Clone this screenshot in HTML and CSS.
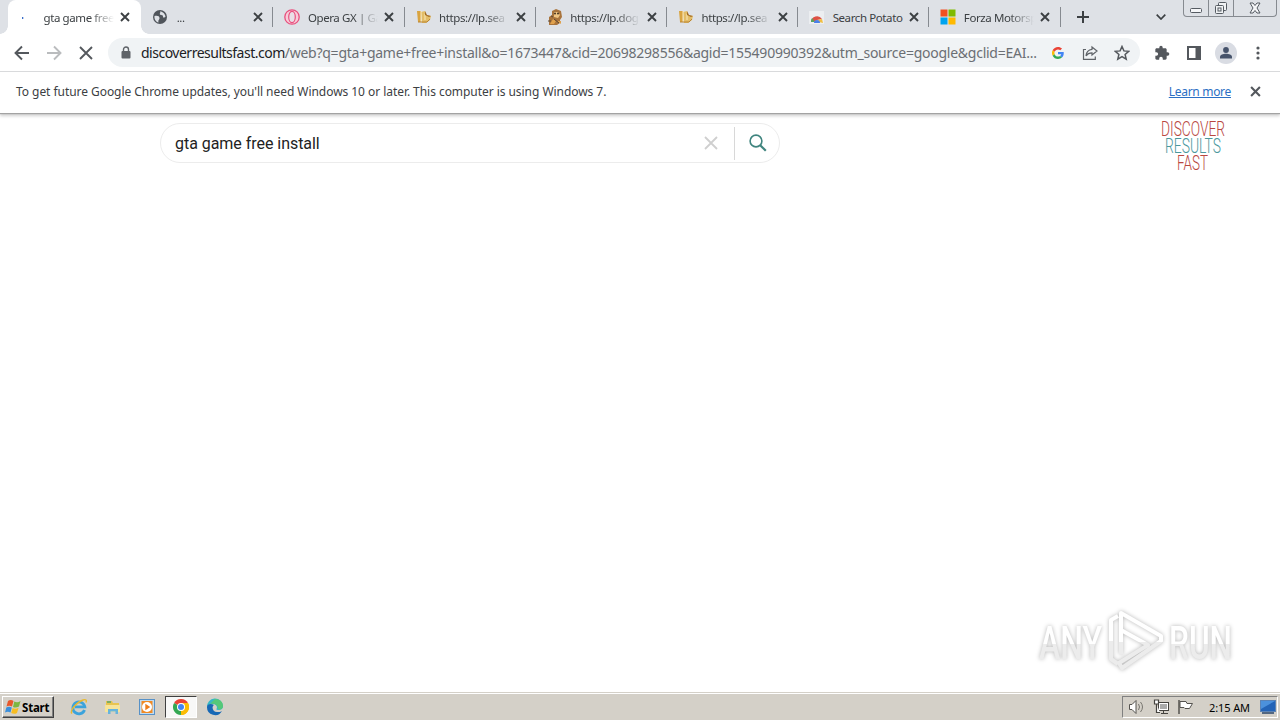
FILE: index.html
```html
<!DOCTYPE html>
<html lang="en">
<head>
    <meta charset="UTF-8">
    <meta name="viewport" content="width=device-width, initial-scale=1.0">
    <title>gta game free install</title>
    <link rel="stylesheet" href="styles.css">
</head>
<body>
    <!-- shared icons -->
    <svg class="defs" width="0" height="0">
        <symbol id="close" viewBox="0 0 10 10"><path d="M1 1l8 8M9 1L1 9" fill="none" stroke="currentColor" stroke-width="1.9"/></symbol>
        <symbol id="puppy" viewBox="0 0 16 16">
            <path d="M1 2h4v11H2z" fill="#d9a441"/><path d="M5 3l4-1 1 4 5 1-1 4-4 3H6z" fill="#e3bd68"/>
            <path d="M5 2v11M9 5v6" stroke="#fbe9bb" stroke-width="1"/><path d="M9 2l2 4 4 1-2 1-4-2z" fill="#a36c25"/>
            <path d="M2 13h9l3-3" fill="none" stroke="#b98534"/>
        </symbol>
        <symbol id="chrome" viewBox="0 0 16 16">
            <path d="M8 8L1.070 4A8 8 0 0 1 14.930 4z" fill="#ea4335"/>
            <path d="M8 8L14.930 4A8 8 0 0 1 8 16z" fill="#fbbc05"/>
            <path d="M8 8v8A8 8 0 0 1 1.070 4z" fill="#34a853"/>
            <path d="M8 4h7a8 8 0 0 1-7 12l3.500-6z" fill="#fbbc05"/>
            <circle cx="8" cy="8" r="4" fill="#fff"/><circle cx="8" cy="8" r="3" fill="#4285f4"/>
        </symbol>
    </svg>

    <div class="tab-strip">
        <div class="tab active">
            <svg class="favicon" viewBox="0 0 16 16"><path d="M.5 8v2" stroke="#3b6fc9" stroke-width="1.600"/></svg>
            <span class="tab-title">gta game free</span>
            <svg class="tab-close"><use href="#close"/></svg>
        </div>
        <div class="tab no-line">
            <svg class="favicon" viewBox="0 0 16 16"><circle cx="7" cy="8" r="7" fill="#50555b"/><path d="M1.500 7c3-.5 5 0 5 2s-1.500 1.500-1 4.500C3 13 1 10 1.500 7zM7 2.500c1 1.500-1 2 0 3s3 0 3 2 2 1 2.500 0C12 5 10 2.500 7 2.500z" fill="#dee1e6"/></svg>
            <span class="tab-title">...</span>
            <svg class="tab-close"><use href="#close"/></svg>
        </div>
        <div class="tab">
            <svg class="favicon" viewBox="0 0 16 16"><circle cx="8" cy="8" r="7.200" fill="#f8cbd8" stroke="#e8507e" stroke-width="1.300"/><ellipse cx="8" cy="8" rx="3.300" ry="5.700" fill="#e9dfe6" stroke="#e8507e" stroke-width="1.200"/></svg>
            <span class="tab-title">Opera GX | Ga</span>
            <svg class="tab-close"><use href="#close"/></svg>
        </div>
        <div class="tab">
            <svg class="favicon"><use href="#puppy"/></svg>
            <span class="tab-title">https://lp.sea</span>
            <svg class="tab-close"><use href="#close"/></svg>
        </div>
        <div class="tab">
            <svg class="favicon" viewBox="0 0 16 16"><path d="M5 2l4-2 5 2 1 6-2 3v3l-3 2H2V8l3-2z" fill="#a9743d"/><path d="M7 3h4l2 3-2 3-4-1z" fill="#f0c583"/><circle cx="8" cy="4.500" r="1" fill="#432"/><circle cx="11" cy="4.500" r="1" fill="#432"/><path d="M3 15l3-5 3 2-2 3zM10 12h4v3z" fill="#e0a24e"/><path d="M1 12h3M7 10l5 4M4 7l2 1" stroke="#5b4632"/></svg>
            <span class="tab-title">https://lp.dog</span>
            <svg class="tab-close"><use href="#close"/></svg>
        </div>
        <div class="tab">
            <svg class="favicon"><use href="#puppy"/></svg>
            <span class="tab-title">https://lp.sea</span>
            <svg class="tab-close"><use href="#close"/></svg>
        </div>
        <div class="tab">
            <svg class="favicon" viewBox="0 0 16 16"><path d="M0 2h15v13H0z" fill="#eceef1"/><path d="M2 13a6 6 0 0 1 11-3l-5 1-3 2z" fill="#dd5144"/><path d="M2 13a6 6 0 0 1 1-4l3 4z" fill="#58a55c"/><path d="M13 10l1 4-4-1-1-2z" fill="#f1bf42"/><path d="M5 14a3 3 0 0 1 6 0z" fill="#4a80e8"/></svg>
            <span class="tab-title full">Search Potato</span>
            <svg class="tab-close"><use href="#close"/></svg>
        </div>
        <div class="tab">
            <svg class="favicon" viewBox="0 0 16 16"><path d="M.5.5h7v7h-7z" fill="#f25022"/><path d="M8.500.5h7v7h-7z" fill="#7fba00"/><path d="M.5 8.500h7v7h-7z" fill="#00a4ef"/><path d="M8.500 8.500h7v7h-7z" fill="#ffb900"/></svg>
            <span class="tab-title">Forza Motorsp</span>
            <svg class="tab-close"><use href="#close"/></svg>
        </div>
        <div class="strip-end">
            <svg class="new-tab" viewBox="0 0 12 12"><path d="M6 0v12M0 6h12" stroke="#3c4043" stroke-width="2"/></svg>
            <svg class="tab-search" viewBox="0 0 10 6"><path d="M.7.7L5 5 9.300.7" fill="none" stroke="#3c4043" stroke-width="1.700"/></svg>
            <div class="window-buttons">
                <span><svg width="12" height="16"><rect x=".5" y="8.500" width="11" height="4" rx="1" fill="#f5f6f8" stroke="#555b62"/></svg></span>
                <span><svg width="14" height="16" fill="#f0f2f4" stroke="#555b62"><rect x="4.500" y="2.500" width="8" height="8" rx="1"/><rect x="1.500" y="5.500" width="8" height="8" rx="1"/><rect x="4" y="8" width="3" height="3"/></svg></span>
                <span class="wide"><svg width="12" height="16" viewBox="0 0 12 16"><path d="M1 3h3l2 2.500L8 3h3L8 8l3 5H8l-2-2.500L4 13H1l3-5z" fill="#f5f6f8" stroke="#555b62"/></svg></span>
            </div>
        </div>
    </div>

    <div class="toolbar">
        <svg class="nav" viewBox="0 0 16 16"><path d="M15 8H2M8 1.500L1.500 8 8 14.500" fill="none" stroke="#54585d" stroke-width="1.900"/></svg>
        <svg class="nav" viewBox="0 0 16 16"><path d="M1 8h13M8 1.500L14.500 8 8 14.500" fill="none" stroke="#babcbe" stroke-width="1.900"/></svg>
        <svg class="nav" viewBox="0 0 16 16"><path d="M2 2l12 12M14 2L2 14" stroke="#54585d" stroke-width="1.900"/></svg>
        <div class="omnibox">
            <svg class="lock" viewBox="0 0 10 13"><path d="M2.500 6V3.500a2.500 2.500 0 0 1 5 0V6" fill="none" stroke="#5f6368" stroke-width="1.400"/><rect x=".5" y="5" width="9" height="7.500" rx="1" fill="#5f6368"/></svg>
            <div class="url"><span class="host">discoverresultsfast.com</span><span class="path">/web?q=gta+game+free+install&amp;o=1673447&amp;cid=20698298556&amp;agid=155490990392&amp;utm_source=google&amp;gclid=EAI...</span></div>
            <svg class="google" viewBox="0 0 48 48"><path fill="#ea4335" d="M24 9.500c3.540 0 6.710 1.220 9.210 3.600l6.850-6.850C35.900 2.380 30.470 0 24 0 14.620 0 6.510 5.380 2.560 13.220l7.980 6.190C12.430 13.720 17.740 9.500 24 9.500z"/><path fill="#4285f4" d="M46.980 24.550c0-1.570-.15-3.090-.38-4.550H24v9.020h12.940c-.58 2.960-2.260 5.480-4.780 7.180l7.730 6c4.510-4.180 7.090-10.360 7.090-17.650z"/><path fill="#fbbc05" d="M10.530 28.590a14.500 14.500 0 0 1 0-9.180l-7.980-6.190a24 24 0 0 0 0 21.560l7.980-6.190z"/><path fill="#34a853" d="M24 48c6.480 0 11.930-2.130 15.890-5.810l-7.730-6c-2.150 1.450-4.920 2.300-8.160 2.300-6.260 0-11.570-4.220-13.470-9.910l-7.980 6.190C6.510 42.620 14.620 48 24 48z"/></svg>
            <svg class="share" viewBox="0 0 16 16"><path d="M4 4.500H1.500v9.800h11.800V11.500" fill="none" stroke="#5f6368" stroke-width="1.200"/><path d="M10 2l5 4-5 4V7.800c-2.500 0-4.500.7-6 3 .3-3.500 2-6 6-6.500z" fill="none" stroke="#5f6368" stroke-width="1.200"/></svg>
            <svg class="star" viewBox="0 0 16 16"><path d="M8 1.500l1.900 4.400 4.800.4-3.600 3.200 1.100 4.700L8 11.700l-4.200 2.500 1.100-4.700L1.300 6.300l4.800-.4z" fill="none" stroke="#54585d" stroke-width="1.500"/></svg>
        </div>
        <svg class="action" viewBox="0 0 24 24"><path fill="#54585d" d="M20.500 11H19V7c0-1.100-.9-2-2-2h-4V3.500a2.500 2.500 0 0 0-5 0V5H4c-1.100 0-2 .9-2 2v3.800h1.500a2.700 2.700 0 0 1 0 5.400H2V20c0 1.100.9 2 2 2h3.800v-1.500a2.700 2.700 0 0 1 5.400 0V22H17c1.100 0 2-.9 2-2v-4h1.500a2.500 2.500 0 0 0 0-5z"/></svg>
        <svg class="action" viewBox="0 0 16 16"><path d="M1 1h14v14H1zM3 3v10h6.500V3z" fill="#54585d" fill-rule="evenodd"/></svg>
        <span class="avatar"><svg width="14" height="14" viewBox="0 0 14 14" fill="#46536b"><circle cx="7" cy="4" r="2.900"/><path d="M1 12.500V11c0-2 3-3.200 6-3.200s6 1.200 6 3.200v1.500z"/></svg></span>
        <svg class="action" viewBox="0 0 16 16" fill="#54585d"><circle cx="8" cy="3" r="1.600"/><circle cx="8" cy="8" r="1.600"/><circle cx="8" cy="13" r="1.600"/></svg>
    </div>

    <div class="infobar">
        <span class="message">To get future Google Chrome updates, you'll need Windows 10 or later. This computer is using Windows 7.</span>
        <a class="learn-more" href="#">Learn more</a>
        <svg class="infobar-close"><use href="#close"/></svg>
    </div>

    <main class="page">
        <div class="search-box">
            <span class="query">gta game free install</span>
            <svg class="clear" viewBox="0 0 14 14"><path d="M1 1l12 12M13 1L1 13" stroke="#cfcfcf" stroke-width="1.800"/></svg>
            <span class="search-button"><svg width="18" height="18" viewBox="0 0 18 18" fill="none" stroke="#40857f"><circle cx="7" cy="7" r="5.900" stroke-width="1.600"/><path d="M11.200 11.200l5.600 5.600" stroke-width="2.200"/></svg></span>
        </div>
        <svg class="logo" width="66" height="52" viewBox="0 0 66 52">
            <text x="1" y="16" textLength="64" lengthAdjust="spacingAndGlyphs" fill="#b9473f">DISCOVER</text>
            <text x="5" y="33" textLength="56" lengthAdjust="spacingAndGlyphs" fill="#4b989d">RESULTS</text>
            <text x="17" y="50" textLength="31" lengthAdjust="spacingAndGlyphs" fill="#b9473f">FAST</text>
        </svg>
    </main>

    <!-- watermark floats over the page -->
    <svg class="watermark" width="204" height="70" viewBox="0 0 204 70">
        <defs>
            <linearGradient id="fade" x1="0" y1="0" x2="0" y2="1"><stop offset=".52" stop-color="#fff"/><stop offset=".52" stop-color="#ececec"/></linearGradient>
        </defs>
        <text x="5" y="53" textLength="63" lengthAdjust="spacingAndGlyphs" fill="url(#fade)">ANY</text>
        <g fill="none" stroke="url(#fade)" stroke-width="4" stroke-linejoin="round">
            <path d="M84 10l-7 4v39l7 5"/>
            <path d="M87 48V7l40 23v5L88 62l-3-5 29-18-27-15"/>
        </g>
        <text x="135" y="53" textLength="63" lengthAdjust="spacingAndGlyphs" fill="url(#fade)">RUN</text>
    </svg>

    <footer class="taskbar">
        <div class="start">
            <svg width="17" height="16" viewBox="0 0 17 16"><path d="M3 2c2-1.500 4-1 5.500 0L7 7.500c-2-1-3.500-1-5.500 0z" fill="#e8582c"/><path d="M9.300 2.500c2 1 4 1 6.200-.5L14 7.500c-2 1.200-4 1.500-6 .5z" fill="#7db642"/><path d="M1.300 8.500c2-1.200 3.700-1 5.500 0L5.500 13.500c-2-1-3.500-1-5.500 0z" fill="#3a8fdc"/><path d="M7.600 9c2 1 4 .8 6-.3L12 14c-2 1.200-4 1-5.800 0z" fill="#f7bd22"/></svg>
            <span>Start</span>
        </div>
        <div class="quick-launch">
            <span class="app"><svg width="18" height="18" viewBox="0 0 18 18" fill="none"><path d="M14.500 12a6 6 0 1 1 .3-3.200H5" stroke="#3ba3dc" stroke-width="2.800"/><path d="M2 15.500C-1 13 7 4 13 2c3-1 4 0 3 2.500" stroke="#e9b92f" stroke-width="1.400"/></svg></span>
            <span class="app"><svg width="18" height="18" viewBox="0 0 18 18"><path d="M2 3h6l1 2h6v9H2z" fill="#e8c44f"/><path d="M1 7h15v7H1z" fill="#f6e49a"/><path d="M4 16v-5h10v5h-2.500v-2.500h-5V16z" fill="#67b4dc"/><path d="M3 4h4" stroke="#5aa56b" stroke-width="1.500"/></svg></span>
            <span class="app"><svg width="18" height="18" viewBox="0 0 18 18"><rect x="1.500" y="1.500" width="15" height="15" fill="#c2dcf0" stroke="#5791c7"/><rect x="3.500" y="3" width="11" height="12" fill="#f08a24"/><circle cx="9" cy="9" r="5" fill="#fff"/><path d="M7.300 5.800v6.400l5-3.200z" fill="#ee7d1a"/></svg></span>
            <span class="app pressed"><svg width="16" height="16"><use href="#chrome"/></svg></span>
            <span class="app"><svg width="18" height="18" viewBox="0 0 18 18"><path d="M1 9a8 8 0 0 1 16-1c0 3-2 4-5 4-2 0-2-1-1-2 0-3-2-4-4-4C4 6 2 7 1 9z" fill="#36b8c5"/><path d="M9 1c5 0 8 3 8 7 0 3-3 4-5 3 0-4-3-6-8-5z" fill="#55c878"/><path d="M1 9c0-3 4-4 7-2-3 2-1 7 3 7 2 0 4 0 5-1a8 8 0 0 1-15-4z" fill="#1768b5"/></svg></span>
        </div>
        <div class="tray">
            <svg width="18" height="16" viewBox="0 0 18 16" fill="#fff" stroke="#55534f"><path d="M1.500 5.500H4l4-4v13l-4-4H1.500z"/><path d="M10.500 5q2 3 0 6M12.500 3q4 5 0 10" fill="none" stroke="#77756f"/></svg>
            <svg width="17" height="16" viewBox="0 0 17 16" fill="#fff" stroke="#45433f"><rect x="5.500" y="3.500" width="10" height="8"/><path d="M7 5h7v5H7z" fill="#aaa" stroke="none"/><path d="M8 14.500h7M10.500 12v2"/><path d="M1.500 1v4h4V1zM3.500 5v8.500H7" stroke-width="1.200"/></svg>
            <svg width="17" height="16" viewBox="0 0 17 16" fill="#fff" stroke="#55534f"><path d="M2 1v14" stroke-width="1.500"/><path d="M3 2.500h6l1 2h5.500l-3 5H8l-1-1H3z"/></svg>
            <span class="clock">2:15 AM</span>
            <svg class="desktop" width="16" height="14" viewBox="0 0 16 14"><rect x=".5" y=".5" width="15" height="11" fill="#2464b7" stroke="#5b83b5"/><path d="M1 1h14L1 9z" fill="#4c91dc"/><path d="M2 13h12" stroke="#294469" stroke-width="1.500"/></svg>
        </div>
    </footer>
</body>
</html>
```
FILE: styles.css
```css
* {
    box-sizing: border-box;
}
body {
    margin: 0;
    height: 720px;
    display: flex;
    flex-direction: column;
    overflow: hidden;
    background-color: #fff;
    color: #3c4043;
    font-family: 'Noto Sans', sans-serif;
    font-size: 12px;
}
svg {
    flex-shrink: 0;
    display: block;
}
.defs {
    position: absolute;
}

/* tabs */
.tab-strip {
    height: 34px;
    flex-shrink: 0;
    display: flex;
    padding-left: 10px;
    background-color: #dee1e6;
}
.tab {
    position: relative;
    width: 131.2px;
    flex-shrink: 0;
    display: flex;
    align-items: center;
    padding-left: 12px;
}
.tab::before {
    content: "";
    position: absolute;
    left: 0;
    top: 7px;
    width: 1px;
    height: 20px;
    background-color: #868a90;
}
.tab.no-line::before {
    display: none;
}
.tab.active {
    background-color: #fff;
    border-radius: 8px 8px 0 0;
    box-shadow: -2px 0 0 #fff;
}
.tab.active::before,
.tab.active::after {
    top: auto;
    bottom: 0;
    width: 8px;
    height: 8px;
}
.tab.active::before {
    left: -10px;
    background: radial-gradient(circle at 0 0, #dee1e6 7.5px, #fff 8px);
}
.tab.active::after {
    content: "";
    position: absolute;
    right: -8px;
    background: radial-gradient(circle at 100% 0, #dee1e6 7.5px, #fff 8px);
}
.favicon {
    width: 16px;
    height: 16px;
}
.tab-title {
    width: 70px;
    margin-left: 7.5px;
    white-space: nowrap;
    font-size: 11.5px;
    letter-spacing: -0.4px;
    -webkit-mask-image: linear-gradient(to right, #000 65%, transparent);
    mask-image: linear-gradient(to right, #000 65%, transparent);
}
.tab-title.full {
    -webkit-mask-image: none;
    mask-image: none;
}
.tab.active .tab-title {
    margin-left: 5.5px;
}
.tab-close {
    width: 10px;
    height: 10px;
    margin-left: 6.5px;
}
.strip-end {
    flex: 1;
    display: flex;
    align-items: center;
    background: linear-gradient(#868a90, #868a90) 0 7px / 1px 20px no-repeat;
    padding-left: 17px;
}
.new-tab {
    width: 12px;
    height: 12px;
}
.tab-search {
    width: 10px;
    height: 6px;
    margin-left: 67px;
}
.window-buttons {
    align-self: flex-start;
    display: flex;
    height: 17px;
    margin-left: 17px;
    border: 1px solid #868a90;
    border-top: 0;
    border-radius: 0 0 4px 4px;
}
.window-buttons span {
    width: 25px;
    display: flex;
    justify-content: center;
    border-right: 1px solid #868a90;
}
.window-buttons .wide {
    width: 42px;
    border-right: 0;
}

/* toolbar */
.toolbar {
    height: 38px;
    flex-shrink: 0;
    display: flex;
    align-items: center;
    padding-left: 14px;
    border-bottom: 1px solid #d9dadc;
}
.nav {
    width: 16px;
    height: 16px;
    margin-right: 16px;
}
.omnibox {
    width: 1032px;
    height: 29px;
    flex-shrink: 0;
    margin-left: -2px;
    margin-right: 14px;
    display: flex;
    align-items: center;
    padding-left: 13px;
    border-radius: 15px;
    background-color: #f0f3f5;
}
.lock {
    width: 10px;
    height: 13px;
}
.url {
    width: 897px;
    margin-left: 10px;
    white-space: nowrap;
    font-size: 14px;
}
.host {
    color: #202124;
    letter-spacing: -0.5px;
}
.path {
    color: #6b6f74;
    letter-spacing: -0.25px;
}
.google {
    width: 12px;
    height: 12px;
    margin-left: 14px;
}
.share,
.star {
    width: 16px;
    height: 16px;
    margin-left: 18px;
}
.star {
    margin-left: 16px;
}
.action {
    width: 16px;
    height: 16px;
    margin-right: 16px;
}
.avatar {
    width: 22px;
    height: 22px;
    flex-shrink: 0;
    display: flex;
    align-items: center;
    justify-content: center;
    margin-left: -3px;
    margin-right: 13px;
    border-radius: 50%;
    background-color: #d9dce3;
}

/* update notice */
.infobar {
    height: 41px;
    flex-shrink: 0;
    display: flex;
    align-items: center;
    padding: 0 19px 2px 16px;
    box-shadow: 0 1px 1px #a3a3a3, 0 3px 3px #d0d0d0;
}
.message {
    flex: 1;
    white-space: nowrap;
    letter-spacing: -0.05px;
}
.learn-more {
    color: #2b6fc4;
    letter-spacing: -0.3px;
}
.infobar-close {
    width: 11px;
    height: 11px;
    margin-left: 19px;
    color: #54585d;
}

/* results page */
.page {
    flex: 1;
    display: flex;
    justify-content: space-between;
    align-items: flex-start;
    padding: 7px 54px 0 160px;
}
.search-box {
    width: 620px;
    height: 40px;
    margin-top: 3px;
    display: flex;
    align-items: center;
    padding-left: 14px;
    border: 1px solid #ececec;
    border-radius: 20px;
}
.query {
    flex: 1;
    color: #222;
    font-family: Roboto, sans-serif;
    font-size: 16px;
    letter-spacing: -0.04px;
}
.clear {
    width: 14px;
    height: 14px;
}
.search-button {
    width: 45px;
    height: 33px;
    margin-left: 16px;
    display: flex;
    align-items: center;
    padding-left: 14px;
    border-left: 1px solid #d8d8d8;
}
.logo text {
    font-family: Roboto, sans-serif;
    font-size: 21px;
    font-weight: 300;
}
.watermark {
    position: absolute;
    left: 1034px;
    top: 606px;
    filter: drop-shadow(0 0 2px #b5b5b5);
}
.watermark text {
    font-family: Roboto, sans-serif;
    font-size: 47px;
    font-weight: 500;
}

/* taskbar */
.taskbar {
    height: 28px;
    flex-shrink: 0;
    display: flex;
    align-items: center;
    padding: 1px 2px 0;
    border-top: 1px solid #d4d0c8;
    background-color: #d4d0c8;
    box-shadow: inset 0 1px 0 #fff;
    color: #000;
}
.start {
    width: 52px;
    height: 22px;
    display: flex;
    align-items: center;
    padding-left: 2px;
    border: 1px solid;
    border-color: #fff #404040 #404040 #fff;
    box-shadow: inset -1px -1px 0 #808080;
    font-weight: bold;
    font-size: 11.5px;
    letter-spacing: -0.2px;
}
.quick-launch {
    display: flex;
    margin-left: 9px;
}
.app {
    width: 32px;
    height: 22px;
    margin-right: 2px;
    display: flex;
    align-items: center;
    justify-content: center;
}
.pressed {
    border: 1px solid;
    border-color: #404040 #fff #fff #404040;
    background-color: #f8f8f7;
}
.tray {
    width: 156px;
    height: 22px;
    margin-left: auto;
    display: flex;
    align-items: center;
    gap: 7px;
    padding-left: 5px;
    border: 1px solid;
    border-color: #808080 #fff #fff #808080;
}
.clock {
    width: 42px;
    margin-left: 8px;
    white-space: nowrap;
    font-size: 11px;
    letter-spacing: -0.1px;
}
.desktop {
    margin-left: 2px;
}
```
